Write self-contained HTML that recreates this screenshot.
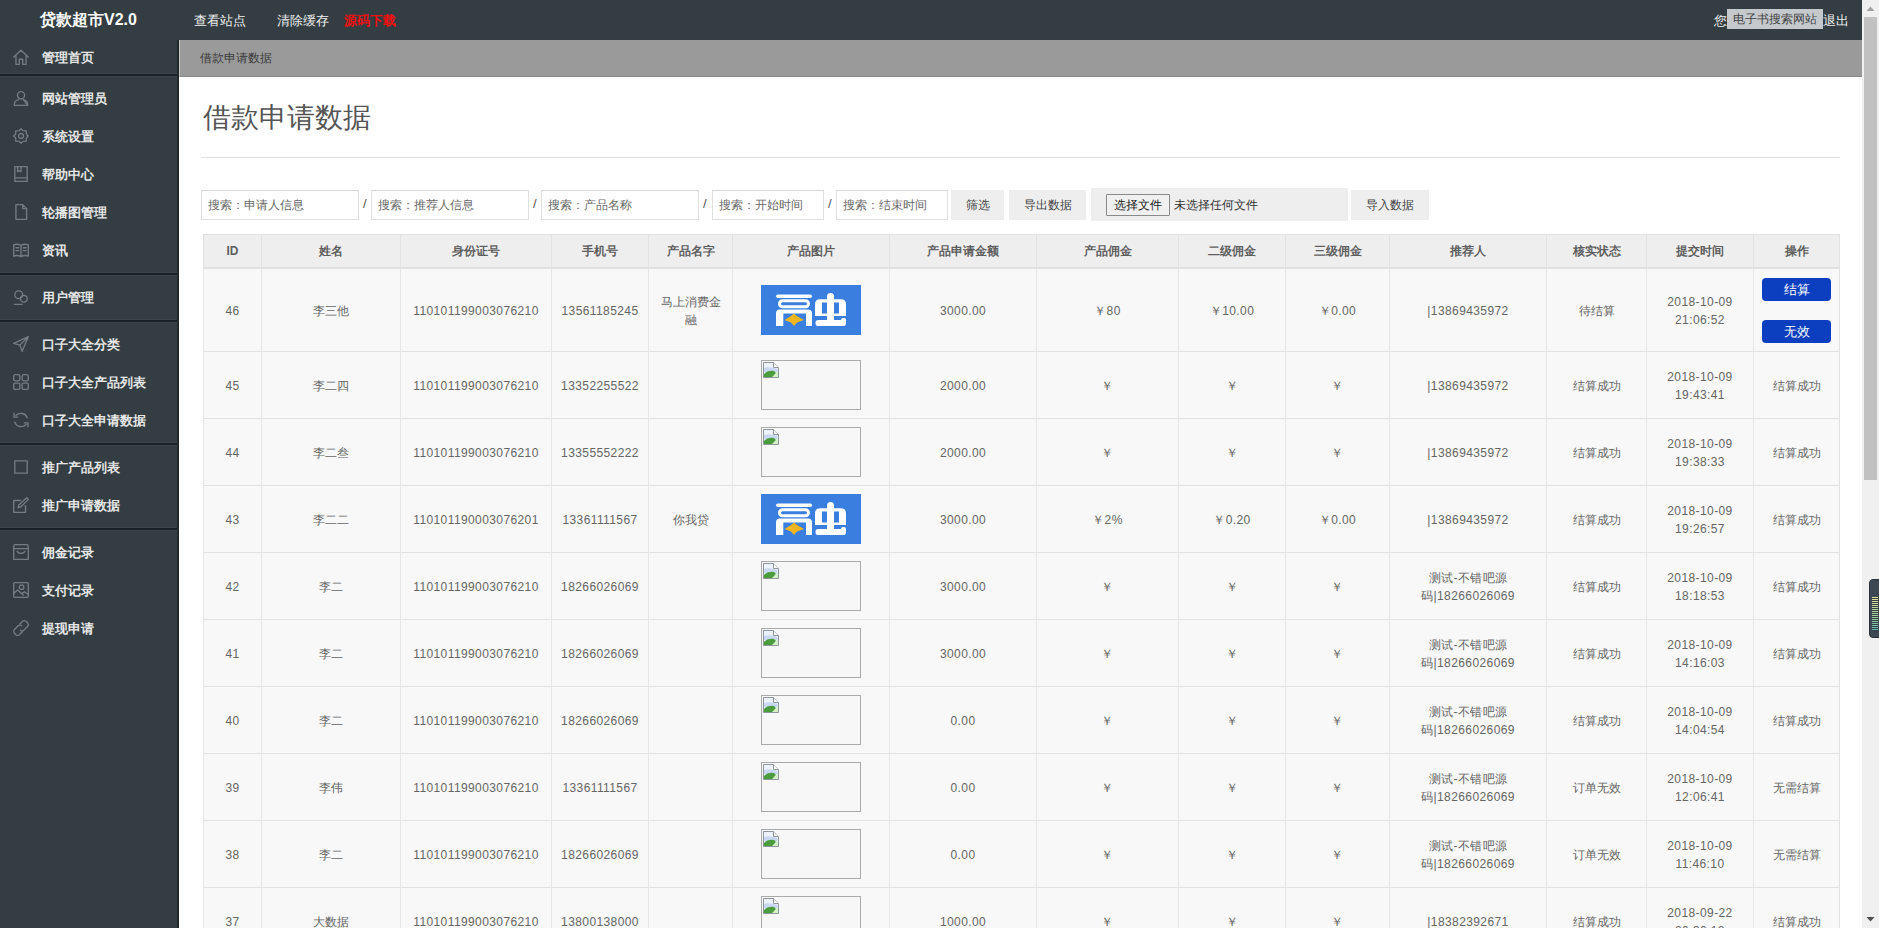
<!DOCTYPE html>
<html><head><meta charset="utf-8">
<style>
*{margin:0;padding:0;box-sizing:border-box}
html,body{width:1879px;height:928px;overflow:hidden;background:#fff;font-family:"Liberation Sans",sans-serif;}
#top{position:absolute;left:0;top:0;width:1862px;height:40px;background:#343e42;color:#fff}
#logo{position:absolute;left:40px;top:10px;font-size:16px;font-weight:bold;color:#fff;line-height:20px;white-space:nowrap}
.tnav{position:absolute;top:13px;font-size:13px;line-height:16px;color:#eee;white-space:nowrap}
#side{position:absolute;left:0;top:40px;width:179px;height:888px;background:#343e42;border-right:2px solid #22292c}
.sep{position:absolute;left:0;width:177px;height:2px;background:#1b2225;box-shadow:0 -1px 0 #3c464a,0 1px 0 #3c464a}
.it{position:absolute;left:42px;font-size:13px;font-weight:bold;color:#e6e6e6;line-height:16px;white-space:nowrap}
.ic{position:absolute;left:12px;width:18px;height:18px}
.ic svg{display:block;fill:none;stroke:#737c81;stroke-width:1.2;stroke-linejoin:round;stroke-linecap:round}
#crumb{position:absolute;left:179px;top:40px;width:1683px;height:37px;background:#9a9a9a;border-left:1px solid #c4c6c8;border-bottom:1px solid #8a8a8a;font-size:12px;color:#3c3c3c;line-height:36px;padding-left:20px;white-space:nowrap}
#title{position:absolute;left:203px;top:100px;font-size:28px;color:#555;line-height:36px;white-space:nowrap}
#hr{position:absolute;left:201px;top:157px;width:1639px;height:1px;background:#e0e0e0}
.inp{position:absolute;top:190px;height:30px;border:1px solid #e0e0e0;border-top-color:#d6d6d6;background:#fff;font-size:12px;color:#6a6a6a;line-height:28px;padding-left:6px;white-space:nowrap}
.sl{position:absolute;top:196px;font-size:13px;color:#555}
.btn{position:absolute;top:190px;height:30px;background:#eee;font-size:12px;color:#444;line-height:30px;text-align:center;white-space:nowrap}
#scroll{position:absolute;left:1862px;top:0;width:17px;height:928px;background:#f0f0f0}
#thumb{position:absolute;left:2px;top:17px;width:13px;height:463px;background:#c1c1c1}
.th{position:absolute;top:234px;height:35px;background:#eee;border-left:1px solid #e2e2e2;border-top:1px solid #e2e2e2;border-bottom:2px solid #e0e0e0;font-size:12px;font-weight:bold;color:#5e5e5e;line-height:33px;text-align:center;white-space:nowrap}
.td{position:absolute;background:#f8f8f8;border-left:1px solid #e6e6e6;border-bottom:1px solid #e2e2e2;font-size:12px;color:#666;line-height:18px;text-align:center;display:flex;align-items:center;justify-content:center;padding-top:1px}
.td span{display:block}
.num{letter-spacing:0.4px}
.logo{width:100px;height:50px}
.logo svg{display:block}
.broken{position:relative;width:100px;height:50px;border:1px solid #aaa;background:#f7f7f7}
.bb{display:block;width:69px;height:23px;border-radius:4px;background:#0b3fbf;color:#fff;font-size:13px;line-height:23px;text-align:center}
</style></head><body>
<div id="top">
  <div id="logo">贷款超市V2.0</div>
  <div class="tnav" style="left:194px">查看站点</div>
  <div class="tnav" style="left:277px">清除缓存</div>
  <div class="tnav" style="left:344px;color:#f01010;font-weight:bold">源码下载</div>
  <div class="tnav" style="left:1714px">您</div>
  <div style="position:absolute;left:1727px;top:9px;width:96px;height:20px;background:#c5c9cc;color:#444;font-size:12px;line-height:20px;text-align:center;white-space:nowrap">电子书搜索网站</div>
  <div class="tnav" style="left:1823px">退出</div>
</div>
<div id="side">
<div class="ic" style="top:8px"><svg width="18" height="18" viewBox="0 0 16 16"><path d="M1.5 8 L8 2 L14.5 8 M3.5 6.5 V14.5 H6.5 V10 H9.5 V14.5 H12.5 V6.5"/></svg></div>
<div class="it" style="top:10px">管理首页</div>
<div class="ic" style="top:49px"><svg width="18" height="18" viewBox="0 0 16 16"><circle cx="8" cy="5.5" r="3.2"/><path d="M2 14.5 Q2 10 6 9.5 M10 9.5 Q14 10 14 14.5 Z M2 14.5 H14"/></svg></div>
<div class="it" style="top:51px">网站管理员</div>
<div class="ic" style="top:87px"><svg width="18" height="18" viewBox="0 0 16 16"><circle cx="8" cy="8" r="2.2"/><path d="M8 1.5 L9.6 3.2 L12.6 3.4 L12.8 6.4 L14.5 8 L12.8 9.6 L12.6 12.6 L9.6 12.8 L8 14.5 L6.4 12.8 L3.4 12.6 L3.2 9.6 L1.5 8 L3.2 6.4 L3.4 3.4 L6.4 3.2 Z"/></svg></div>
<div class="it" style="top:89px">系统设置</div>
<div class="ic" style="top:125px"><svg width="18" height="18" viewBox="0 0 16 16"><path d="M2.5 1.5 H13.5 V14.5 H2.5 Z M2.5 11.5 H13.5 M5 1.5 V6 L6.5 5 L8 6 V1.5"/></svg></div>
<div class="it" style="top:127px">帮助中心</div>
<div class="ic" style="top:163px"><svg width="18" height="18" viewBox="0 0 16 16"><path d="M3.5 1.5 H9.5 L13 5 V14.5 H3.5 Z M9.5 1.5 V5 H13"/></svg></div>
<div class="it" style="top:165px">轮播图管理</div>
<div class="ic" style="top:201px"><svg width="18" height="18" viewBox="0 0 16 16"><path d="M1.5 3.5 Q5 2 8 4 Q11 2 14.5 3.5 V13.5 Q11 12 8 14 Q5 12 1.5 13.5 Z M8 4 V14 M3.5 6 H6 M3.5 8.5 H6 M10 6 H12.5 M10 8.5 H12.5"/></svg></div>
<div class="it" style="top:203px">资讯</div>
<div class="ic" style="top:248px"><svg width="18" height="18" viewBox="0 0 16 16"><circle cx="6" cy="6" r="3.5"/><circle cx="10.5" cy="9.5" r="3"/><path d="M2 14.5 H9"/></svg></div>
<div class="it" style="top:250px">用户管理</div>
<div class="ic" style="top:295px"><svg width="18" height="18" viewBox="0 0 16 16"><path d="M14.5 1.5 L1.5 7.5 L7 9 L9 14.5 Z M7 9 L14.5 1.5"/></svg></div>
<div class="it" style="top:297px">口子大全分类</div>
<div class="ic" style="top:333px"><svg width="18" height="18" viewBox="0 0 16 16"><rect x="1.5" y="1.5" width="5.5" height="5.5" rx="1.5"/><rect x="9" y="1.5" width="5.5" height="5.5" rx="1.5"/><rect x="1.5" y="9" width="5.5" height="5.5" rx="1"/><rect x="9" y="9" width="5.5" height="5.5" rx="1"/></svg></div>
<div class="it" style="top:335px">口子大全产品列表</div>
<div class="ic" style="top:371px"><svg width="18" height="18" viewBox="0 0 16 16"><path d="M3.5 4 A6 6 0 0 1 13.5 6 M12.5 12 A6 6 0 0 1 2.5 10 M1.8 2 V5.5 H5 M14.2 14 V10.5 H11"/></svg></div>
<div class="it" style="top:373px">口子大全申请数据</div>
<div class="ic" style="top:418px"><svg width="18" height="18" viewBox="0 0 16 16"><rect x="2.5" y="2.5" width="11" height="11"/></svg></div>
<div class="it" style="top:420px">推广产品列表</div>
<div class="ic" style="top:456px"><svg width="18" height="18" viewBox="0 0 16 16"><path d="M12 8.5 V14.5 H1.5 V4 H7.5 M5.5 10.5 L6 8 L13 1.5 L14.5 3 L8 9.5 Z"/></svg></div>
<div class="it" style="top:458px">推广申请数据</div>
<div class="ic" style="top:503px"><svg width="18" height="18" viewBox="0 0 16 16"><path d="M1.5 3 Q1.5 1.5 3 1.5 H13 Q14.5 1.5 14.5 3 V14.5 H1.5 Z M1.5 5 H14.5 M4.5 7.5 Q8 11 11.5 7.5"/></svg></div>
<div class="it" style="top:505px">佣金记录</div>
<div class="ic" style="top:541px"><svg width="18" height="18" viewBox="0 0 16 16"><rect x="1.5" y="1.5" width="13" height="13" rx="1"/><circle cx="8.5" cy="5.5" r="2"/><path d="M1.5 11 L5 8 L10 12.5 M9 11 L11 9.5 L14.5 12"/></svg></div>
<div class="it" style="top:543px">支付记录</div>
<div class="ic" style="top:579px"><svg width="18" height="18" viewBox="0 0 16 16"><path d="M7 4.5 L9.5 2 Q11 0.8 12.5 2 L14 3.5 Q15.2 5 14 6.5 L10.5 10 Q9 11.2 7.5 10 M9 11.5 L6.5 14 Q5 15.2 3.5 14 L2 12.5 Q0.8 11 2 9.5 L5.5 6 Q7 4.8 8.5 6"/></svg></div>
<div class="it" style="top:581px">提现申请</div>
<div class="sep" style="top:34px"></div>
<div class="sep" style="top:233px"></div>
<div class="sep" style="top:280px"></div>
<div class="sep" style="top:403px"></div>
<div class="sep" style="top:488px"></div>
</div>
<div id="crumb">借款申请数据</div>
<div id="title">借款申请数据</div>
<div id="hr"></div>
<div class="inp" style="left:201px;width:158px">搜索：申请人信息</div>
<div class="sl" style="left:363px">/</div>
<div class="inp" style="left:371px;width:158px">搜索：推荐人信息</div>
<div class="sl" style="left:533px">/</div>
<div class="inp" style="left:541px;width:158px">搜索：产品名称</div>
<div class="sl" style="left:703px">/</div>
<div class="inp" style="left:712px;width:112px">搜索：开始时间</div>
<div class="sl" style="left:828px">/</div>
<div class="inp" style="left:836px;width:112px">搜索：结束时间</div>
<div class="btn" style="left:951px;width:53px">筛选</div>
<div class="btn" style="left:1009px;width:77px">导出数据</div>
<div class="btn" style="left:1091px;width:257px;top:188px;height:33px"></div>
<div style="position:absolute;left:1106px;top:194px;width:64px;height:22px;border:1px solid #8a8a8a;background:#f0f0f0;border-radius:1px;font-size:12px;color:#222;line-height:20px;text-align:center;white-space:nowrap">选择文件</div>
<div style="position:absolute;left:1174px;top:197px;font-size:12px;color:#333;line-height:16px;white-space:nowrap">未选择任何文件</div>
<div class="btn" style="left:1351px;width:78px">导入数据</div>

<div class="th" style="left:203px;width:58px">ID</div>
<div class="th" style="left:261px;width:139px">姓名</div>
<div class="th" style="left:400px;width:151px">身份证号</div>
<div class="th" style="left:551px;width:97px">手机号</div>
<div class="th" style="left:648px;width:84px">产品名字</div>
<div class="th" style="left:732px;width:157px">产品图片</div>
<div class="th" style="left:889px;width:147px">产品申请金额</div>
<div class="th" style="left:1036px;width:142px">产品佣金</div>
<div class="th" style="left:1178px;width:107px">二级佣金</div>
<div class="th" style="left:1285px;width:104px">三级佣金</div>
<div class="th" style="left:1389px;width:157px">推荐人</div>
<div class="th" style="left:1546px;width:100px">核实状态</div>
<div class="th" style="left:1646px;width:107px">提交时间</div>
<div class="th" style="left:1753px;width:87px;border-right:1px solid #e2e2e2">操作</div>
<div class="td" style="left:203px;top:269px;width:58px;height:83px"><span class="num">46</span></div>
<div class="td" style="left:261px;top:269px;width:139px;height:83px"><span>李三他</span></div>
<div class="td" style="left:400px;top:269px;width:151px;height:83px"><span class="num">110101199003076210</span></div>
<div class="td" style="left:551px;top:269px;width:97px;height:83px"><span class="num">13561185245</span></div>
<div class="td" style="left:648px;top:269px;width:84px;height:83px"><span>马上消费金<br>融</span></div>
<div class="td" style="left:732px;top:269px;width:157px;height:83px;padding-top:0"><div class="logo"><svg width="100" height="50" viewBox="0 0 100 50"><rect width="100" height="50" fill="#3a7ee0"/>
<g fill="#fff"><rect x="15" y="9.5" width="36" height="3.5" rx="1.7"/>
<path d="M15 41 V28.5 Q15 24.6 19 24.6 H47 Q51 24.6 51 28.5 V41 H45 V28.5 H22.3 V41 Z"/>
<circle cx="69.5" cy="11.5" r="3.5"/><rect x="66" y="11" width="7" height="27"/>
<path d="M54 31 V19.5 Q54 14.2 59 14.2 H80 Q85 14.2 85 19.5 V31 Z"/>
<rect x="54.5" y="35" width="30.5" height="6" rx="2.8"/><rect x="80" y="33" width="5" height="6" rx="2"/></g>
<rect x="18.5" y="15.7" width="29" height="6" rx="3" fill="none" stroke="#fff" stroke-width="3"/>
<g fill="#3a7ee0"><rect x="61" y="17.5" width="5" height="11"/><rect x="73" y="17.5" width="5" height="11"/></g>
<path d="M23.5 35 L30 31 L33 28.5 L36 31 L43 35 L36 37.5 L33 41 L30 37.5 Z" fill="#f2b522"/>
</svg></div></div>
<div class="td" style="left:889px;top:269px;width:147px;height:83px"><span class="num">3000.00</span></div>
<div class="td" style="left:1036px;top:269px;width:142px;height:83px"><span class="num">￥80</span></div>
<div class="td" style="left:1178px;top:269px;width:107px;height:83px"><span class="num">￥10.00</span></div>
<div class="td" style="left:1285px;top:269px;width:104px;height:83px"><span class="num">￥0.00</span></div>
<div class="td" style="left:1389px;top:269px;width:157px;height:83px"><span class="num">|13869435972</span></div>
<div class="td" style="left:1546px;top:269px;width:100px;height:83px"><span>待结算</span></div>
<div class="td" style="left:1646px;top:269px;width:107px;height:83px"><span class="num">2018-10-09<br>21:06:52</span></div>
<div class="td" style="left:1753px;top:269px;width:87px;height:83px;border-right:1px solid #e2e2e2"><div><span class="bb">结算</span><span class="bb" style="margin-top:19px">无效</span></div></div>
<div class="td" style="left:203px;top:352px;width:58px;height:67px"><span class="num">45</span></div>
<div class="td" style="left:261px;top:352px;width:139px;height:67px"><span>李二四</span></div>
<div class="td" style="left:400px;top:352px;width:151px;height:67px"><span class="num">110101199003076210</span></div>
<div class="td" style="left:551px;top:352px;width:97px;height:67px"><span class="num">13352255522</span></div>
<div class="td" style="left:648px;top:352px;width:84px;height:67px"><span></span></div>
<div class="td" style="left:732px;top:352px;width:157px;height:67px;padding-top:0"><div class="broken"><svg width="16" height="16" viewBox="0 0 16 16" style="position:absolute;left:1px;top:1px">
<path d="M0.5 0.5 H10.5 L15.5 5.5 V15.5 H0.5 Z" fill="#eef2fb" stroke="#8f969c" stroke-width="1"/><path d="M10.5 0.5 V5.5 H15.5" fill="#fff" stroke="#8f969c"/>
<path d="M1 6 Q6 4 14.5 7 V10 L1 10 Z" fill="#c9d8f2"/><path d="M1 15 V12 Q5 8 11 9 L13 11 L10 15 Z" fill="#4a9c3c"/><path d="M9 15 L15 9 V15 Z" fill="#d6f0c8"/></svg></div></div>
<div class="td" style="left:889px;top:352px;width:147px;height:67px"><span class="num">2000.00</span></div>
<div class="td" style="left:1036px;top:352px;width:142px;height:67px"><span class="num">￥</span></div>
<div class="td" style="left:1178px;top:352px;width:107px;height:67px"><span class="num">￥</span></div>
<div class="td" style="left:1285px;top:352px;width:104px;height:67px"><span class="num">￥</span></div>
<div class="td" style="left:1389px;top:352px;width:157px;height:67px"><span class="num">|13869435972</span></div>
<div class="td" style="left:1546px;top:352px;width:100px;height:67px"><span>结算成功</span></div>
<div class="td" style="left:1646px;top:352px;width:107px;height:67px"><span class="num">2018-10-09<br>19:43:41</span></div>
<div class="td" style="left:1753px;top:352px;width:87px;height:67px;border-right:1px solid #e2e2e2"><span>结算成功</span></div>
<div class="td" style="left:203px;top:419px;width:58px;height:67px"><span class="num">44</span></div>
<div class="td" style="left:261px;top:419px;width:139px;height:67px"><span>李二叁</span></div>
<div class="td" style="left:400px;top:419px;width:151px;height:67px"><span class="num">110101199003076210</span></div>
<div class="td" style="left:551px;top:419px;width:97px;height:67px"><span class="num">13355552222</span></div>
<div class="td" style="left:648px;top:419px;width:84px;height:67px"><span></span></div>
<div class="td" style="left:732px;top:419px;width:157px;height:67px;padding-top:0"><div class="broken"><svg width="16" height="16" viewBox="0 0 16 16" style="position:absolute;left:1px;top:1px">
<path d="M0.5 0.5 H10.5 L15.5 5.5 V15.5 H0.5 Z" fill="#eef2fb" stroke="#8f969c" stroke-width="1"/><path d="M10.5 0.5 V5.5 H15.5" fill="#fff" stroke="#8f969c"/>
<path d="M1 6 Q6 4 14.5 7 V10 L1 10 Z" fill="#c9d8f2"/><path d="M1 15 V12 Q5 8 11 9 L13 11 L10 15 Z" fill="#4a9c3c"/><path d="M9 15 L15 9 V15 Z" fill="#d6f0c8"/></svg></div></div>
<div class="td" style="left:889px;top:419px;width:147px;height:67px"><span class="num">2000.00</span></div>
<div class="td" style="left:1036px;top:419px;width:142px;height:67px"><span class="num">￥</span></div>
<div class="td" style="left:1178px;top:419px;width:107px;height:67px"><span class="num">￥</span></div>
<div class="td" style="left:1285px;top:419px;width:104px;height:67px"><span class="num">￥</span></div>
<div class="td" style="left:1389px;top:419px;width:157px;height:67px"><span class="num">|13869435972</span></div>
<div class="td" style="left:1546px;top:419px;width:100px;height:67px"><span>结算成功</span></div>
<div class="td" style="left:1646px;top:419px;width:107px;height:67px"><span class="num">2018-10-09<br>19:38:33</span></div>
<div class="td" style="left:1753px;top:419px;width:87px;height:67px;border-right:1px solid #e2e2e2"><span>结算成功</span></div>
<div class="td" style="left:203px;top:486px;width:58px;height:67px"><span class="num">43</span></div>
<div class="td" style="left:261px;top:486px;width:139px;height:67px"><span>李二二</span></div>
<div class="td" style="left:400px;top:486px;width:151px;height:67px"><span class="num">110101190003076201</span></div>
<div class="td" style="left:551px;top:486px;width:97px;height:67px"><span class="num">13361111567</span></div>
<div class="td" style="left:648px;top:486px;width:84px;height:67px"><span>你我贷</span></div>
<div class="td" style="left:732px;top:486px;width:157px;height:67px;padding-top:0"><div class="logo"><svg width="100" height="50" viewBox="0 0 100 50"><rect width="100" height="50" fill="#3a7ee0"/>
<g fill="#fff"><rect x="15" y="9.5" width="36" height="3.5" rx="1.7"/>
<path d="M15 41 V28.5 Q15 24.6 19 24.6 H47 Q51 24.6 51 28.5 V41 H45 V28.5 H22.3 V41 Z"/>
<circle cx="69.5" cy="11.5" r="3.5"/><rect x="66" y="11" width="7" height="27"/>
<path d="M54 31 V19.5 Q54 14.2 59 14.2 H80 Q85 14.2 85 19.5 V31 Z"/>
<rect x="54.5" y="35" width="30.5" height="6" rx="2.8"/><rect x="80" y="33" width="5" height="6" rx="2"/></g>
<rect x="18.5" y="15.7" width="29" height="6" rx="3" fill="none" stroke="#fff" stroke-width="3"/>
<g fill="#3a7ee0"><rect x="61" y="17.5" width="5" height="11"/><rect x="73" y="17.5" width="5" height="11"/></g>
<path d="M23.5 35 L30 31 L33 28.5 L36 31 L43 35 L36 37.5 L33 41 L30 37.5 Z" fill="#f2b522"/>
</svg></div></div>
<div class="td" style="left:889px;top:486px;width:147px;height:67px"><span class="num">3000.00</span></div>
<div class="td" style="left:1036px;top:486px;width:142px;height:67px"><span class="num">￥2%</span></div>
<div class="td" style="left:1178px;top:486px;width:107px;height:67px"><span class="num">￥0.20</span></div>
<div class="td" style="left:1285px;top:486px;width:104px;height:67px"><span class="num">￥0.00</span></div>
<div class="td" style="left:1389px;top:486px;width:157px;height:67px"><span class="num">|13869435972</span></div>
<div class="td" style="left:1546px;top:486px;width:100px;height:67px"><span>结算成功</span></div>
<div class="td" style="left:1646px;top:486px;width:107px;height:67px"><span class="num">2018-10-09<br>19:26:57</span></div>
<div class="td" style="left:1753px;top:486px;width:87px;height:67px;border-right:1px solid #e2e2e2"><span>结算成功</span></div>
<div class="td" style="left:203px;top:553px;width:58px;height:67px"><span class="num">42</span></div>
<div class="td" style="left:261px;top:553px;width:139px;height:67px"><span>李二</span></div>
<div class="td" style="left:400px;top:553px;width:151px;height:67px"><span class="num">110101199003076210</span></div>
<div class="td" style="left:551px;top:553px;width:97px;height:67px"><span class="num">18266026069</span></div>
<div class="td" style="left:648px;top:553px;width:84px;height:67px"><span></span></div>
<div class="td" style="left:732px;top:553px;width:157px;height:67px;padding-top:0"><div class="broken"><svg width="16" height="16" viewBox="0 0 16 16" style="position:absolute;left:1px;top:1px">
<path d="M0.5 0.5 H10.5 L15.5 5.5 V15.5 H0.5 Z" fill="#eef2fb" stroke="#8f969c" stroke-width="1"/><path d="M10.5 0.5 V5.5 H15.5" fill="#fff" stroke="#8f969c"/>
<path d="M1 6 Q6 4 14.5 7 V10 L1 10 Z" fill="#c9d8f2"/><path d="M1 15 V12 Q5 8 11 9 L13 11 L10 15 Z" fill="#4a9c3c"/><path d="M9 15 L15 9 V15 Z" fill="#d6f0c8"/></svg></div></div>
<div class="td" style="left:889px;top:553px;width:147px;height:67px"><span class="num">3000.00</span></div>
<div class="td" style="left:1036px;top:553px;width:142px;height:67px"><span class="num">￥</span></div>
<div class="td" style="left:1178px;top:553px;width:107px;height:67px"><span class="num">￥</span></div>
<div class="td" style="left:1285px;top:553px;width:104px;height:67px"><span class="num">￥</span></div>
<div class="td" style="left:1389px;top:553px;width:157px;height:67px"><span class="num">测试-不错吧源<br>码|18266026069</span></div>
<div class="td" style="left:1546px;top:553px;width:100px;height:67px"><span>结算成功</span></div>
<div class="td" style="left:1646px;top:553px;width:107px;height:67px"><span class="num">2018-10-09<br>18:18:53</span></div>
<div class="td" style="left:1753px;top:553px;width:87px;height:67px;border-right:1px solid #e2e2e2"><span>结算成功</span></div>
<div class="td" style="left:203px;top:620px;width:58px;height:67px"><span class="num">41</span></div>
<div class="td" style="left:261px;top:620px;width:139px;height:67px"><span>李二</span></div>
<div class="td" style="left:400px;top:620px;width:151px;height:67px"><span class="num">110101199003076210</span></div>
<div class="td" style="left:551px;top:620px;width:97px;height:67px"><span class="num">18266026069</span></div>
<div class="td" style="left:648px;top:620px;width:84px;height:67px"><span></span></div>
<div class="td" style="left:732px;top:620px;width:157px;height:67px;padding-top:0"><div class="broken"><svg width="16" height="16" viewBox="0 0 16 16" style="position:absolute;left:1px;top:1px">
<path d="M0.5 0.5 H10.5 L15.5 5.5 V15.5 H0.5 Z" fill="#eef2fb" stroke="#8f969c" stroke-width="1"/><path d="M10.5 0.5 V5.5 H15.5" fill="#fff" stroke="#8f969c"/>
<path d="M1 6 Q6 4 14.5 7 V10 L1 10 Z" fill="#c9d8f2"/><path d="M1 15 V12 Q5 8 11 9 L13 11 L10 15 Z" fill="#4a9c3c"/><path d="M9 15 L15 9 V15 Z" fill="#d6f0c8"/></svg></div></div>
<div class="td" style="left:889px;top:620px;width:147px;height:67px"><span class="num">3000.00</span></div>
<div class="td" style="left:1036px;top:620px;width:142px;height:67px"><span class="num">￥</span></div>
<div class="td" style="left:1178px;top:620px;width:107px;height:67px"><span class="num">￥</span></div>
<div class="td" style="left:1285px;top:620px;width:104px;height:67px"><span class="num">￥</span></div>
<div class="td" style="left:1389px;top:620px;width:157px;height:67px"><span class="num">测试-不错吧源<br>码|18266026069</span></div>
<div class="td" style="left:1546px;top:620px;width:100px;height:67px"><span>结算成功</span></div>
<div class="td" style="left:1646px;top:620px;width:107px;height:67px"><span class="num">2018-10-09<br>14:16:03</span></div>
<div class="td" style="left:1753px;top:620px;width:87px;height:67px;border-right:1px solid #e2e2e2"><span>结算成功</span></div>
<div class="td" style="left:203px;top:687px;width:58px;height:67px"><span class="num">40</span></div>
<div class="td" style="left:261px;top:687px;width:139px;height:67px"><span>李二</span></div>
<div class="td" style="left:400px;top:687px;width:151px;height:67px"><span class="num">110101199003076210</span></div>
<div class="td" style="left:551px;top:687px;width:97px;height:67px"><span class="num">18266026069</span></div>
<div class="td" style="left:648px;top:687px;width:84px;height:67px"><span></span></div>
<div class="td" style="left:732px;top:687px;width:157px;height:67px;padding-top:0"><div class="broken"><svg width="16" height="16" viewBox="0 0 16 16" style="position:absolute;left:1px;top:1px">
<path d="M0.5 0.5 H10.5 L15.5 5.5 V15.5 H0.5 Z" fill="#eef2fb" stroke="#8f969c" stroke-width="1"/><path d="M10.5 0.5 V5.5 H15.5" fill="#fff" stroke="#8f969c"/>
<path d="M1 6 Q6 4 14.5 7 V10 L1 10 Z" fill="#c9d8f2"/><path d="M1 15 V12 Q5 8 11 9 L13 11 L10 15 Z" fill="#4a9c3c"/><path d="M9 15 L15 9 V15 Z" fill="#d6f0c8"/></svg></div></div>
<div class="td" style="left:889px;top:687px;width:147px;height:67px"><span class="num">0.00</span></div>
<div class="td" style="left:1036px;top:687px;width:142px;height:67px"><span class="num">￥</span></div>
<div class="td" style="left:1178px;top:687px;width:107px;height:67px"><span class="num">￥</span></div>
<div class="td" style="left:1285px;top:687px;width:104px;height:67px"><span class="num">￥</span></div>
<div class="td" style="left:1389px;top:687px;width:157px;height:67px"><span class="num">测试-不错吧源<br>码|18266026069</span></div>
<div class="td" style="left:1546px;top:687px;width:100px;height:67px"><span>结算成功</span></div>
<div class="td" style="left:1646px;top:687px;width:107px;height:67px"><span class="num">2018-10-09<br>14:04:54</span></div>
<div class="td" style="left:1753px;top:687px;width:87px;height:67px;border-right:1px solid #e2e2e2"><span>结算成功</span></div>
<div class="td" style="left:203px;top:754px;width:58px;height:67px"><span class="num">39</span></div>
<div class="td" style="left:261px;top:754px;width:139px;height:67px"><span>李伟</span></div>
<div class="td" style="left:400px;top:754px;width:151px;height:67px"><span class="num">110101199003076210</span></div>
<div class="td" style="left:551px;top:754px;width:97px;height:67px"><span class="num">13361111567</span></div>
<div class="td" style="left:648px;top:754px;width:84px;height:67px"><span></span></div>
<div class="td" style="left:732px;top:754px;width:157px;height:67px;padding-top:0"><div class="broken"><svg width="16" height="16" viewBox="0 0 16 16" style="position:absolute;left:1px;top:1px">
<path d="M0.5 0.5 H10.5 L15.5 5.5 V15.5 H0.5 Z" fill="#eef2fb" stroke="#8f969c" stroke-width="1"/><path d="M10.5 0.5 V5.5 H15.5" fill="#fff" stroke="#8f969c"/>
<path d="M1 6 Q6 4 14.5 7 V10 L1 10 Z" fill="#c9d8f2"/><path d="M1 15 V12 Q5 8 11 9 L13 11 L10 15 Z" fill="#4a9c3c"/><path d="M9 15 L15 9 V15 Z" fill="#d6f0c8"/></svg></div></div>
<div class="td" style="left:889px;top:754px;width:147px;height:67px"><span class="num">0.00</span></div>
<div class="td" style="left:1036px;top:754px;width:142px;height:67px"><span class="num">￥</span></div>
<div class="td" style="left:1178px;top:754px;width:107px;height:67px"><span class="num">￥</span></div>
<div class="td" style="left:1285px;top:754px;width:104px;height:67px"><span class="num">￥</span></div>
<div class="td" style="left:1389px;top:754px;width:157px;height:67px"><span class="num">测试-不错吧源<br>码|18266026069</span></div>
<div class="td" style="left:1546px;top:754px;width:100px;height:67px"><span>订单无效</span></div>
<div class="td" style="left:1646px;top:754px;width:107px;height:67px"><span class="num">2018-10-09<br>12:06:41</span></div>
<div class="td" style="left:1753px;top:754px;width:87px;height:67px;border-right:1px solid #e2e2e2"><span>无需结算</span></div>
<div class="td" style="left:203px;top:821px;width:58px;height:67px"><span class="num">38</span></div>
<div class="td" style="left:261px;top:821px;width:139px;height:67px"><span>李二</span></div>
<div class="td" style="left:400px;top:821px;width:151px;height:67px"><span class="num">110101199003076210</span></div>
<div class="td" style="left:551px;top:821px;width:97px;height:67px"><span class="num">18266026069</span></div>
<div class="td" style="left:648px;top:821px;width:84px;height:67px"><span></span></div>
<div class="td" style="left:732px;top:821px;width:157px;height:67px;padding-top:0"><div class="broken"><svg width="16" height="16" viewBox="0 0 16 16" style="position:absolute;left:1px;top:1px">
<path d="M0.5 0.5 H10.5 L15.5 5.5 V15.5 H0.5 Z" fill="#eef2fb" stroke="#8f969c" stroke-width="1"/><path d="M10.5 0.5 V5.5 H15.5" fill="#fff" stroke="#8f969c"/>
<path d="M1 6 Q6 4 14.5 7 V10 L1 10 Z" fill="#c9d8f2"/><path d="M1 15 V12 Q5 8 11 9 L13 11 L10 15 Z" fill="#4a9c3c"/><path d="M9 15 L15 9 V15 Z" fill="#d6f0c8"/></svg></div></div>
<div class="td" style="left:889px;top:821px;width:147px;height:67px"><span class="num">0.00</span></div>
<div class="td" style="left:1036px;top:821px;width:142px;height:67px"><span class="num">￥</span></div>
<div class="td" style="left:1178px;top:821px;width:107px;height:67px"><span class="num">￥</span></div>
<div class="td" style="left:1285px;top:821px;width:104px;height:67px"><span class="num">￥</span></div>
<div class="td" style="left:1389px;top:821px;width:157px;height:67px"><span class="num">测试-不错吧源<br>码|18266026069</span></div>
<div class="td" style="left:1546px;top:821px;width:100px;height:67px"><span>订单无效</span></div>
<div class="td" style="left:1646px;top:821px;width:107px;height:67px"><span class="num">2018-10-09<br>11:46:10</span></div>
<div class="td" style="left:1753px;top:821px;width:87px;height:67px;border-right:1px solid #e2e2e2"><span>无需结算</span></div>
<div class="td" style="left:203px;top:888px;width:58px;height:67px"><span class="num">37</span></div>
<div class="td" style="left:261px;top:888px;width:139px;height:67px"><span>大数据</span></div>
<div class="td" style="left:400px;top:888px;width:151px;height:67px"><span class="num">110101199003076210</span></div>
<div class="td" style="left:551px;top:888px;width:97px;height:67px"><span class="num">13800138000</span></div>
<div class="td" style="left:648px;top:888px;width:84px;height:67px"><span></span></div>
<div class="td" style="left:732px;top:888px;width:157px;height:67px;padding-top:0"><div class="broken"><svg width="16" height="16" viewBox="0 0 16 16" style="position:absolute;left:1px;top:1px">
<path d="M0.5 0.5 H10.5 L15.5 5.5 V15.5 H0.5 Z" fill="#eef2fb" stroke="#8f969c" stroke-width="1"/><path d="M10.5 0.5 V5.5 H15.5" fill="#fff" stroke="#8f969c"/>
<path d="M1 6 Q6 4 14.5 7 V10 L1 10 Z" fill="#c9d8f2"/><path d="M1 15 V12 Q5 8 11 9 L13 11 L10 15 Z" fill="#4a9c3c"/><path d="M9 15 L15 9 V15 Z" fill="#d6f0c8"/></svg></div></div>
<div class="td" style="left:889px;top:888px;width:147px;height:67px"><span class="num">1000.00</span></div>
<div class="td" style="left:1036px;top:888px;width:142px;height:67px"><span class="num">￥</span></div>
<div class="td" style="left:1178px;top:888px;width:107px;height:67px"><span class="num">￥</span></div>
<div class="td" style="left:1285px;top:888px;width:104px;height:67px"><span class="num">￥</span></div>
<div class="td" style="left:1389px;top:888px;width:157px;height:67px"><span class="num">|18382392671</span></div>
<div class="td" style="left:1546px;top:888px;width:100px;height:67px"><span>结算成功</span></div>
<div class="td" style="left:1646px;top:888px;width:107px;height:67px"><span class="num">2018-09-22<br>20:30:12</span></div>
<div class="td" style="left:1753px;top:888px;width:87px;height:67px;border-right:1px solid #e2e2e2"><span>结算成功</span></div>
<div id="scroll"><div id="thumb"></div>
<svg style="position:absolute;left:0;top:0" width="17" height="17"><path d="M4.5 11 L8.5 6.5 L12.5 11 Z" fill="#a3a3a3"/></svg>
<svg style="position:absolute;left:0;top:911px" width="17" height="17"><path d="M4.5 6 L8.5 10.5 L12.5 6 Z" fill="#505050"/></svg>
</div>
<div style="position:absolute;left:1869px;top:579px;width:14px;height:59px;border-radius:4px;background:#3e4852;border:1px solid #2a3138"></div>
<div style="position:absolute;left:1872px;top:597px;width:6px;height:34px;background:repeating-linear-gradient(180deg,rgba(0,0,0,0) 0 1px,rgba(52,62,70,1) 1px 2px),linear-gradient(180deg,#e8e29a,#9ccf9a 60%,#5fb6b0)"></div>
</body></html>
